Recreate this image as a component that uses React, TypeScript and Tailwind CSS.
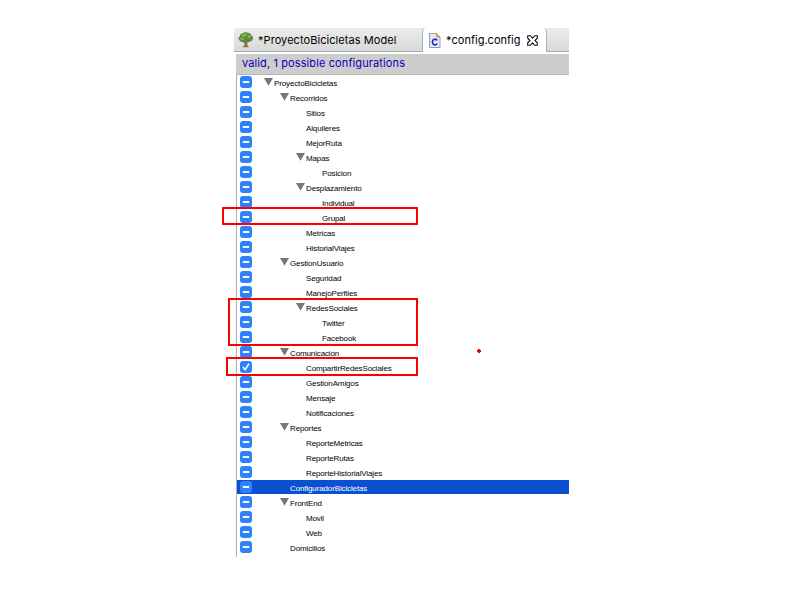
import React from "react";

type Kind = "leaf" | "open";
type Row = { label: string; depth: number; kind?: Kind; checked?: boolean; selected?: boolean };

const rows: Row[] = [
  { label: "ProyectoBicicletas", depth: 0, kind: "open" },
  { label: "Recorridos", depth: 1, kind: "open" },
  { label: "Sitios", depth: 2 },
  { label: "Alquileres", depth: 2 },
  { label: "MejorRuta", depth: 2 },
  { label: "Mapas", depth: 2, kind: "open" },
  { label: "Posicion", depth: 3 },
  { label: "Desplazamiento", depth: 2, kind: "open" },
  { label: "Individual", depth: 3 },
  { label: "Grupal", depth: 3 },
  { label: "Metricas", depth: 2 },
  { label: "HistorialViajes", depth: 2 },
  { label: "GestionUsuario", depth: 1, kind: "open" },
  { label: "Seguridad", depth: 2 },
  { label: "ManejoPerfiles", depth: 2 },
  { label: "RedesSociales", depth: 2, kind: "open" },
  { label: "Twitter", depth: 3 },
  { label: "Facebook", depth: 3 },
  { label: "Comunicacion", depth: 1, kind: "open" },
  { label: "CompartirRedesSociales", depth: 2, checked: true },
  { label: "GestionAmigos", depth: 2 },
  { label: "Mensaje", depth: 2 },
  { label: "Notificaciones", depth: 2 },
  { label: "Reportes", depth: 1, kind: "open" },
  { label: "ReporteMetricas", depth: 2 },
  { label: "ReporteRutas", depth: 2 },
  { label: "ReporteHistorialViajes", depth: 2 },
  { label: "ConfiguradorBicicletas", depth: 1, selected: true },
  { label: "FrontEnd", depth: 1, kind: "open" },
  { label: "Movil", depth: 2 },
  { label: "Web", depth: 2 },
  { label: "Domicilios", depth: 1 },
];

const indent = ["w-3", "w-7", "w-11", "w-15"];

function TreeIcon() {
  return (
    <svg width="16" height="16" viewBox="0 0 16 16" className="shrink-0">
      <path d="M6.3 8.500h3l.1 4.500 1.600 2.200H4.700L6.400 13z" fill="#9a6a3a" />
      <path d="M4 1.500Q7-.6 10.5.8q2.8.4 3 2.7 2.3 1.4 1.4 3.4-.6 2.800-3 2.700-1.400 1.200-3.600.5-2 1-3.800-.2Q1.800 10.200 1 7.800 0 5.600 1.700 4.300 1.600 2.100 4 1.500z" fill="#5b8c3c" />
      <path d="M4 2.800Q7 .800 9.500 1.900L8 4.200 4 5zM9.500 3.800l3-.8.500 2.200-3 .8zM2 6.500l3-1 1.500 1.500L3.500 8.500z" fill="#86b355" />
      <path d="M7 10 5 8.300m4 1.700L11 8.300" stroke="#7f5a2e" fill="none" />
    </svg>
  );
}

function ConfigIcon() {
  return (
    <svg width="12" height="15" viewBox="0 0 12 15" className="shrink-0">
      <path d="M.5.500h7l3.500 3.500v10.500H.500z" fill="#e3ebf8" stroke="#8c9dbf" />
      <path d="M.500.500h7L11 4" fill="none" stroke="#b89d5c" />
      <path d="M7.500.500V4H11z" fill="#dcb565" stroke="#c09b50" />
      <path d="M8.300 7.400Q7.600 6.300 6 6.300 3.400 6.500 3.400 9.100q0 2.600 2.600 2.800 1.600 0 2.300-1.200" fill="none" stroke="#2a20c8" strokeWidth="1.500" />
    </svg>
  );
}

function CloseIcon() {
  return (
    <svg width="11" height="11" viewBox="0 0 11 11" className="shrink-0">
      <path d="M.7.700h2.600l2.200 2.400L7.700.700h2.600v2.500L8 5.500l2.300 2.300v2.500H7.700L5.500 7.900l-2.200 2.400H.700V7.800L3 5.500.700 3.200z" fill="#fff" stroke="#111" strokeWidth="1.100" />
    </svg>
  );
}

function Check({ checked }: { checked?: boolean }) {
  return (
    <svg width="12" height="12" viewBox="0 0 12 12" className="mt-px shrink-0">
      <rect width="12" height="12" rx="3" fill="#2d81fb" />
      {checked ? (
        <path d="M3.200 6.300 5.200 8.600 8.700 3.100" fill="none" stroke="#fff" strokeWidth="1.600" strokeLinecap="round" />
      ) : (
        <path d="M2.800 6h6.400" stroke="#fff" strokeWidth="2" />
      )}
    </svg>
  );
}

function TreeRow({ row }: { row: Row }) {
  return (
    <div className={`flex h-[15px] items-start pl-[3px] ${row.selected ? "text-white bg-[linear-gradient(#0a50d0_14px,#fff_14px)]" : "text-black"}`}>
      <Check checked={row.checked} />
      <span className={`shrink-0 ${indent[row.depth]}`} />
      <span className="w-[10px] shrink-0">
        {row.kind === "open" && (
          <svg width="9" height="8" viewBox="0 0 9 8" className="mt-[3px]">
            <path d="M0 0h9L4.500 7.800z" fill="#777" />
          </svg>
        )}
      </span>
      <span className="mt-px text-[8px] leading-[15px] tracking-[-0.13px] whitespace-nowrap">{row.label}</span>
    </div>
  );
}

export default function App() {
  return (
    <div className="relative h-[600px] w-[800px] overflow-hidden bg-white pt-7 pl-[234px] font-['Liberation_Sans',sans-serif]">
      <div className="w-[335px]">
        <div className="flex h-6 font-[Inter,sans-serif] text-[11px] leading-6 text-black">
          <div className="flex w-[188px] items-center rounded-tl-[3px] border-b border-[#a5abb9] bg-linear-to-b from-[#ededed] to-[#d8d8d8] pl-[4px]">
            <TreeIcon />
            <span className="ml-[4px] tracking-[0.06px] whitespace-nowrap">*ProyectoBicicletas Model</span>
          </div>
          <div className="bg-[#ededed]">
            <div className="flex h-6 w-[125px] items-center rounded-t-[4px] border-x border-[#a3aecb] bg-white pl-[6px]">
              <ConfigIcon />
              <span className="ml-[5px] w-[81px] tracking-[0.01px] whitespace-nowrap">*config.config</span>
              <CloseIcon />
            </div>
          </div>
          <div className="flex-1 border-b border-[#a5abb9] bg-linear-to-b from-[#ededed] to-[#d8d8d8]" />
        </div>
        <div className="mt-[2px] ml-[2px] h-[21px] border-b border-[#b5b5b5] bg-[#cdcdcd] pl-[6px] font-[Inter,sans-serif] text-[11px] leading-[19px] tracking-[0.11px] whitespace-nowrap text-[#0a00b4]">
          valid, 1 possible configurations
        </div>
        <div className="ml-[2px] h-[482px] border-l border-[#b0b0b0]">
          {rows.map((row) => (
            <TreeRow key={row.label} row={row} />
          ))}
        </div>
      </div>
      <div className="absolute top-[207px] left-[222px] h-[18px] w-[196px] border-2 border-[#fb0000]" />
      <div className="absolute top-[298px] left-[228px] h-[48px] w-[190px] border-2 border-[#fb0000]" />
      <div className="absolute top-[357px] left-[226px] h-[19px] w-[192px] border-2 border-[#fb0000]" />
      <svg className="absolute top-[349px] left-[477px]" width="4" height="4" viewBox="0 0 4 4">
        <path d="M1 0h2v1h1v2H3v1H1V3H0V1h1z" fill="#ee0000" />
      </svg>
    </div>
  );
}
